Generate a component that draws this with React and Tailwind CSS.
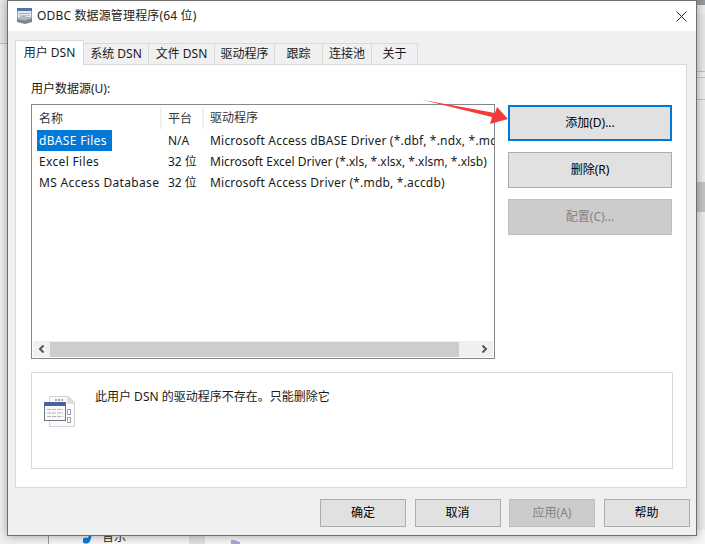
const tabs = [
  { label: "系统 DSN", width: "w-[65px]" },
  { label: "文件 DSN", width: "w-[66px]" },
  { label: "驱动程序", width: "w-[60px]" },
  { label: "跟踪", width: "w-[48px]" },
  { label: "连接池", width: "w-[49px]" },
  { label: "关于", width: "w-[46px]" },
];

const rows = [
  { name: "dBASE Files", bits: "N/A", driver: "Microsoft Access dBASE Driver (*.dbf, *.ndx, *.mdb)", spacing: "tracking-[0.2px]", selected: true },
  { name: "Excel Files", bits: "32 位", driver: "Microsoft Excel Driver (*.xls, *.xlsx, *.xlsm, *.xlsb)", spacing: "" },
  { name: "MS Access Database", bits: "32 位", driver: "Microsoft Access Driver (*.mdb, *.accdb)", spacing: "tracking-[0.2px]" },
];

const footerButtons = [
  { label: "确定" },
  { label: "取消" },
  { label: "应用(A)", disabled: true },
  { label: "帮助" },
];

function WinButton({ children, disabled, focused, className = "" }) {
  let look = "border-[#adadad] bg-[#e1e1e1] text-black";
  if (disabled) look = "border-[#bfbfbf] bg-[#cccccc] text-[#838383]";
  if (focused) look = "border-2 border-[#0078d7] bg-[#e1e1e1] text-black";
  return (
    <div className={`flex items-center justify-center border text-[12px] ${look} ${className}`}>
      {children}
    </div>
  );
}

function TitleIcon() {
  return (
    <svg width="17" height="17" viewBox="0 0 17 17">
      <rect x="1.5" y="0.5" width="14" height="11" fill="#e4e7ea" stroke="#9aa0a8" />
      <rect x="1" y="0" width="15" height="3" fill="#4f74a8" />
      <rect x="3" y="5" width="11" height="1" fill="#a8adb3" />
      <rect x="3" y="7" width="11" height="1" fill="#c2c5c9" />
      <path d="M1 11 L6 8 L16 10 L16 14 L9 16 L1 14 Z" fill="#7f868e" />
      <path d="M1 11 L6 8 L16 10 L9 12.5 Z" fill="#b4b9bf" />
    </svg>
  );
}

function FileIcon() {
  return (
    <svg width="32" height="33" viewBox="0 0 32 33">
      <path d="M5.5 1.5 H24 L30.5 8 V31.5 H5.5 Z" fill="#fbfbfb" stroke="#d3d3d3" />
      <path d="M24 1.5 V8 H30.5 Z" fill="#e2e2e2" stroke="#cfcfcf" />
      <path d="M11 5 H19" stroke="#a9a9b4" strokeWidth="2" strokeDasharray="2 1" />
      <rect x="23.5" y="14.5" width="3" height="5" fill="none" stroke="#a3a3b8" />
      <rect x="23.5" y="22.5" width="3" height="5" fill="none" stroke="#a3a3b8" />
      <rect x="0.5" y="7.5" width="21" height="18" fill="#fafafa" stroke="#6d7486" />
      <rect x="0.5" y="7.5" width="21" height="3" fill="#46659f" stroke="#46659f" />
      <path d="M3 14.5 H19 M3 18 H19 M3 21.5 H19" stroke="#b4b4b4" strokeWidth="1" strokeDasharray="4 1" />
    </svg>
  );
}

function Chevron({ left }) {
  return (
    <svg width="7" height="8" viewBox="0 0 7 8" className="text-[#555]">
      <path d={left ? "M5.5 0.5 L2 4 L5.5 7.5" : "M1.5 0.5 L5 4 L1.5 7.5"} fill="none" stroke="currentColor" strokeWidth="2" />
    </svg>
  );
}

// what shows around the dialog: the desktop windows behind it
function Backdrop() {
  return (
    <>
      <div className="absolute left-0 top-0 h-[44px] w-[8px] border-b border-[#c4c4c4] bg-[#e8e8e4]" />
      <div className="absolute left-[697px] top-0 h-[544px] w-[8px] bg-[#ececec]" />
      <div className="absolute left-[697px] top-0 h-[5px] w-[8px] bg-[#8f9aa0]" />
      <div className="absolute left-[697px] top-[14px] h-[58px] w-[8px] border-b border-[#c0c0c0] bg-[#e6e6e6]" />
      <div className="absolute left-[697px] top-[77px] h-[23px] w-[8px] border-y border-[#c0c0c0]" />
      <div className="absolute left-[697px] top-[182px] h-[30px] w-[8px] bg-[#c4c4c4]" />
      <div className="absolute left-[48px] top-[530px] h-[14px] w-[657px] border-l border-[#9a9a9a] bg-[#f6f6f6]" />
      <div className="absolute left-[189px] top-[530px] h-[14px] w-[16px] bg-[#e0e0e0]" />
      <svg width="14" height="12" viewBox="0 0 14 12" className="absolute left-[83px] top-[532px]">
        <path d="M7 0 L10 0 L7 9 A4 3 0 1 1 5 6 Z" fill="#0f7bd6" />
        <path d="M11 2 L13 1 L12 4 Z" fill="#0f7bd6" />
      </svg>
      <span className="absolute left-[102px] top-[529px] text-[12px] leading-[16px] text-[#222]">音乐</span>
      <svg width="12" height="8" viewBox="0 0 12 8" className="absolute left-[230px] top-[540px]">
        <path d="M1 0 L4 0 L10 2 L10 8 L1 8 Z" fill="#a6a6dc" />
      </svg>
    </>
  );
}

export default function App() {
  return (
    <div className="relative h-[544px] w-[705px] overflow-hidden bg-[#f0f0f0] font-['Noto_Sans','Noto_Sans_CJK_SC',sans-serif] text-[12px] text-[#1a1a1a]">
      <Backdrop />

      <div className="relative ml-[7px] h-[536px] w-[690px] border border-[#6f6f6f] bg-[#f0f0f0] shadow-[0_0_9px_rgba(0,0,0,0.35)]">
        {/* title bar */}
        <div className="flex h-[30px] items-center bg-white pl-2 pr-[9px]">
          <TitleIcon />
          <span className="ml-[4px] text-[12px] tracking-[0.15px] text-[#222]">ODBC 数据源管理程序(64 位)</span>
          <svg width="11" height="11" viewBox="0 0 11 11" className="ml-auto">
            <path d="M0.5 0.5 L10.5 10.5 M10.5 0.5 L0.5 10.5" stroke="#222" strokeWidth="1" />
          </svg>
        </div>

        {/* tabs */}
        <div className="ml-[7px] mt-[9px] flex h-[25px] items-end">
          <div className="relative z-10 flex h-[25px] w-[69px] items-center justify-center border border-b-0 border-[#d9d9d9] bg-white text-[12px]">
            用户 DSN
          </div>
          {tabs.map((tab) => (
            <div
              key={tab.label}
              className={`flex h-[22px] items-center justify-center border-y border-r border-[#d9d9d9] bg-[#f0f0f0] ${tab.width}`}
            >
              {tab.label}
            </div>
          ))}
        </div>

        {/* page */}
        <div className="-mt-px ml-[7px] h-[424px] w-[672px] border border-[#d9d9d9] bg-white pl-[15px]">
          <div className="pt-[16px] leading-[16px]">用户数据源(U):</div>
          <div className="mt-[7px] flex gap-[13px]">
            <div className="flex h-[255px] w-[464px] flex-col border border-[#828790] bg-white">
              <div className="flex h-[25px] items-center text-[#333]">
                <div className="h-[22px] w-[130px] border-r-2 border-[#f0f0f0] pl-[7px] leading-[24px]">名称</div>
                <div className="h-[22px] w-[42px] border-r-2 border-[#f0f0f0] pl-[6px] leading-[24px]">平台</div>
                <div className="pl-[6px]">驱动程序</div>
              </div>
              <div className="flex-1 overflow-hidden">
                {rows.map((row) => (
                  <div key={row.name} className="flex h-[21px] items-center whitespace-nowrap">
                    <div className="w-[130px] shrink-0 pl-[5px]">
                      <span className={`inline-block h-[21px] pl-[2px] leading-[21px] tracking-[0.33px] ${row.selected ? "w-[75px] bg-[#0078d7] text-white" : ""}`}>
                        {row.name}
                      </span>
                    </div>
                    <div className="w-[42px] shrink-0 pl-[6px]">{row.bits}</div>
                    <div className={`shrink-0 pl-[6px] ${row.spacing}`}>{row.driver}</div>
                  </div>
                ))}
              </div>
              <div className="mx-px mb-px flex h-[16px] items-center bg-[#f0f0f0]">
                <div className="flex h-full w-[17px] items-center justify-center"><Chevron left /></div>
                <div className="h-[15px] flex-1 bg-[#cdcdcd]" />
                <div className="flex h-full w-[34px] items-center justify-end pr-[5px]"><Chevron /></div>
              </div>
            </div>

            <div className="flex w-[164px] flex-col gap-[11px] pt-px">
              <WinButton focused className="h-[36px]">添加(D)...</WinButton>
              <WinButton className="h-[36px]">删除(R)</WinButton>
              <WinButton disabled className="h-[36px]">配置(C)...</WinButton>
            </div>
          </div>

          <div className="mt-[13px] flex h-[97px] w-[642px] border border-[#d9d9d9] pl-[12px]">
            <div className="mt-[22px]"><FileIcon /></div>
            <div className="ml-[19px] mt-[16px] leading-[16px]">此用户 DSN 的驱动程序不存在。只能删除它</div>
          </div>
        </div>

        {/* footer */}
        <div className="ml-[312px] mt-[11px] flex gap-[8.5px]">
          {footerButtons.map((btn) => (
            <WinButton key={btn.label} disabled={btn.disabled} className="h-[28px] w-[86px]">{btn.label}</WinButton>
          ))}
        </div>
      </div>

      {/* red annotation arrow */}
      <svg width="100" height="40" viewBox="0 0 100 40" className="absolute left-[420px] top-[95px]">
        <path d="M3 5 L75 18 L77 12 L88 24 L70 29 L72 22 Z" fill="#f5383b" />
      </svg>
    </div>
  );
}
